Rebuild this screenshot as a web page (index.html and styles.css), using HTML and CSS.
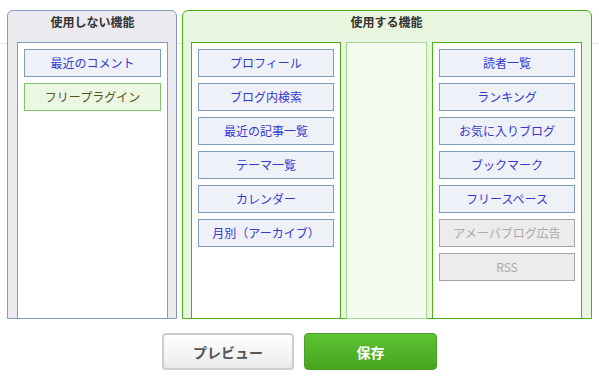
FILE: index.html
```html
<!DOCTYPE html>
<html lang="ja">
<head>
    <meta charset="UTF-8">
    <meta name="viewport" content="width=device-width, initial-scale=1.0">
    <title>機能設定</title>

    <link rel="stylesheet" href="styles.css">
</head>
<body>
  <div class="page">
    <div class="boards">

      <div class="panel panel-off">
        <h2 class="panel-title">使用しない機能</h2>
        <div class="cols">
          <ul class="list list-off">
            <li class="item">最近のコメント</li>
            <li class="item item-new">フリープラグイン</li>
          </ul>
        </div>
      </div>

      <div class="panel panel-on">
        <h2 class="panel-title">使用する機能</h2>
        <div class="cols">
          <ul class="list list-side">
            <li class="item">プロフィール</li>
            <li class="item">ブログ内検索</li>
            <li class="item">最近の記事一覧</li>
            <li class="item">テーマ一覧</li>
            <li class="item">カレンダー</li>
            <li class="item">月別（アーカイブ）</li>
          </ul>
          <div class="list list-mid"></div>
          <ul class="list list-side">
            <li class="item">読者一覧</li>
            <li class="item">ランキング</li>
            <li class="item">お気に入りブログ</li>
            <li class="item">ブックマーク</li>
            <li class="item">フリースペース</li>
            <li class="item item-fixed">アメーバブログ広告</li>
            <li class="item item-fixed">RSS</li>
          </ul>
        </div>
      </div>

    </div>

    <div class="actions">
      <button class="btn btn-preview" type="button">プレビュー</button>
      <button class="btn btn-save" type="submit">保存</button>
    </div>
  </div>
</body>
</html>
```

FILE: styles.css
```css
*{
  margin: 0;
  padding: 0;
  box-sizing: border-box;
}

body{
  background-color: white;
  font-family: "Noto Sans CJK JP", "Noto Sans", sans-serif;
  font-size: 12px;
  color: #333;
}

.page{
  padding-top: 10px;
  padding-left: 7px;
  background: linear-gradient(#e6e6e6, #e6e6e6) 0 43px / 100% 1px no-repeat;
}

.boards{
  display: flex;
  gap: 5px;
}

.panel{
  display: flex;
  flex-direction: column;
  height: 309px;
  border: 1px solid;
  border-radius: 6px 6px 0 0;
}

.panel-off{
  width: 170px;
  border-color: #7f9cbb;
  background-color: #ebebef;
  padding: 0 8px 0 9px;
}

.panel-on{
  width: 410px;
  border-color: #4cb01e;
  background-color: #e8f5df;
  padding: 0 9px 0 8px;
}

.panel-title{
  height: 31px;
  line-height: 22px;
  text-align: center;
  font-size: 12px;
  font-weight: bold;
  color: #333;
}

.cols{
  flex: 1;
  display: flex;
  gap: 5px;
  margin-bottom: -1px;
}

.list{
  list-style: none;
  display: flex;
  flex-direction: column;
  gap: 6px;
  padding: 6px 6px 0;
  background-color: white;
  border: 1px solid;
}

.list-off{
  flex: 1;
  border-color: #7f9cbb;
}

.list-side{
  width: 150px;
  border-color: #4cb01e;
}

.list-mid{
  width: 81px;
  border-color: #a5d98f;
  background-color: #f3faee;
}

.item{
  height: 28px;
  line-height: 26px;
  text-align: center;
  border: 1px solid #7f9cbb;
  background-color: #eef2f8;
  color: #3737cf;
  white-space: nowrap;
}

.item-new{
  border-color: #80c46e;
  background-color: #eaf7e3;
  color: #56541c;
}

.item-fixed{
  border-color: #a3a3a3;
  background-color: #ececec;
  color: #a9a9a9;
}

.actions{
  display: flex;
  justify-content: center;
  gap: 10px;
  margin-top: 14px;
  padding-right: 7px;
}

.btn{
  width: 132px;
  height: 37px;
  border-radius: 4px;
  font-family: "Noto Sans CJK JP", "Noto Sans", sans-serif;
  font-size: 14px;
  font-weight: bold;
  cursor: pointer;
}

.btn-preview{
  border: 2px solid #cdcdcd;
  background: linear-gradient(#ffffff, #ebebeb);
  color: #555;
}

.btn-save{
  width: 133px;
  border: 1px solid #4a9f26;
  background: linear-gradient(#5dc334, #47a51f);
  color: white;
}
```
